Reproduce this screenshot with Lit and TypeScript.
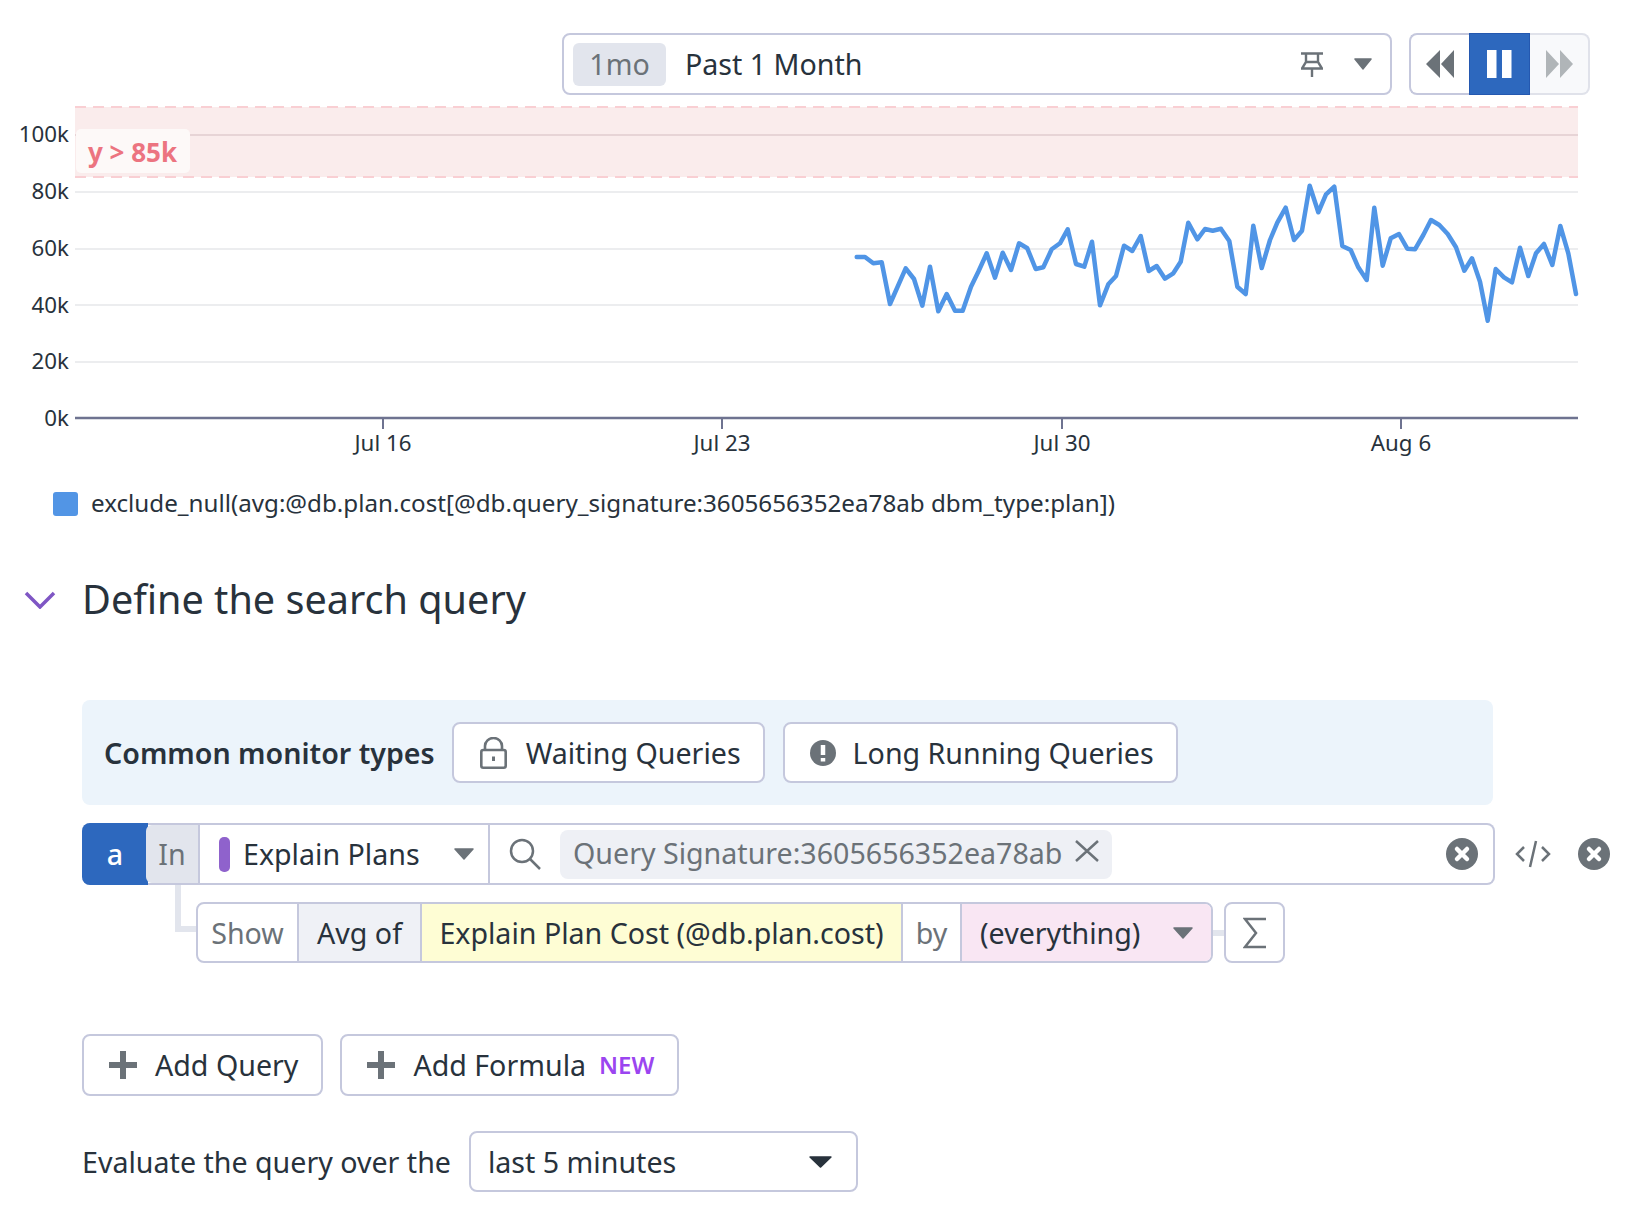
import { LitElement, html, svg, css } from "lit";
import { customElement } from "lit/decorators.js";

// points read off the reference, in page pixels
const zoomA = [[50,261],[75,261],[100,280],[125,277],[150,402],[197,295],[222,327],[247,407],[270,290],[295,424],[320,372],[345,422],[368,422],[393,350],[415,305],[440,250],[465,323],[488,248],[513,300],[537,220],[562,235],[587,297],[610,292],[635,238],[660,220],[683,178],[708,282],[733,290],[756,215],[780,406],[805,343],[828,318],[852,227],[877,243],[902,198],[926,303],[950,288],[975,326],[1000,310],[1022,275],[1045,158],[1072,208],[1095,177],[1118,182],[1143,176]];
const zoomB = [[3,177],[28,213],[52,350],[77,372],[100,167],[125,294],[150,210],[172,158],[197,113],[222,210],[246,182],[269,47],[295,127],[318,73],[343,50],[367,228],[392,240],[415,292],[440,330],[463,113],[488,287],[512,205],[537,192],[562,236],[585,238],[610,195],[633,150],[658,165],[683,192],[708,232],[733,302],[756,265],[780,335],[803,452],[827,297],[852,322],[876,337],[900,233],[925,318],[948,250],[972,222],[997,285],[1021,168],[1045,250],[1068,372]];
const CHART_TOP = 100;
const linePoints = [
  ...zoomA.map(([x, y]) => [840 + x / 3, 170 + y / 3 - CHART_TOP]),
  ...zoomB.map(([x, y]) => [1220 + x / 3, 170 + y / 3 - CHART_TOP]),
].map(([x, y]) => `${x.toFixed(1)},${y.toFixed(1)}`).join(" ");

const yTicks = [
  { label: "100k", y: 35, textY: 42 },
  { label: "80k", y: 92, textY: 99 },
  { label: "60k", y: 149, textY: 156 },
  { label: "40k", y: 205, textY: 213 },
  { label: "20k", y: 262, textY: 269 },
];
const xTicks = [
  { label: "Jul 16", x: 383 },
  { label: "Jul 23", x: 722 },
  { label: "Jul 30", x: 1062 },
  { label: "Aug 6", x: 1401 },
];

const caret = (color: string, w = 20) => html`<svg class="caret" width=${w} height="12" viewBox="0 0 20 12" preserveAspectRatio="none"><path d="M1 1H19L10 11Z" fill=${color} stroke=${color} stroke-width="1.5" stroke-linejoin="round"></path></svg>`;
const circleX = html`<svg width="32" height="32" viewBox="0 0 32 32"><circle cx="16" cy="16" r="16" fill="#6b7278"></circle><path d="M11 11L21 21M21 11L11 21" stroke="#fff" stroke-width="4.5" stroke-linecap="round"></path></svg>`;
const plus = html`<svg width="30" height="30" viewBox="0 0 30 30"><path d="M15 1V29M1 15H29" stroke="#6b7278" stroke-width="6"></path></svg>`;

@customElement("app-root")
export class AppRoot extends LitElement {
  static styles = css`
    :host {
      display: block;
      width: 1636px;
      height: 1222px;
      padding-top: 33px;
      box-sizing: border-box;
      font-family: "Noto Sans", sans-serif;
      font-size: 28.6px;
      color: #28323c;
      background: #fff;
    }
    .toolbar {
      display: flex;
      justify-content: flex-end;
      gap: 17px;
      height: 62px;
      padding-right: 46px;
    }
    .picker {
      width: 830px;
      box-sizing: border-box;
      display: flex;
      align-items: center;
      border: 2px solid #c5c8dd;
      border-radius: 8px;
      padding: 0 18px 0 9px;
    }
    .picker .badge {
      width: 93px;
      height: 43px;
      box-sizing: border-box;
      padding-bottom: 2px;
      background: #e2e5ed;
      border-radius: 6px;
      color: #6b7278;
      display: flex;
      align-items: center;
      justify-content: center;
      margin-right: 19px;
    }
    .picker .range { flex: 1; padding-bottom: 2px; }
    .picker .pin { margin-right: 31px; display: block; }
    .playback {
      width: 181px;
      box-sizing: border-box;
      display: flex;
    }
    .playback div {
      display: flex;
      align-items: center;
      justify-content: center;
      box-sizing: border-box;
    }
    .playback .back {
      width: 60px;
      border: 2px solid #c5c8dd;
      border-right: 0;
      border-radius: 8px 0 0 8px;
    }
    .playback .pause {
      width: 61px;
      background: #2d68be;
      box-shadow: inset 0 0 0 1px #2458b0;
    }
    .playback .forward {
      flex: 1;
      background: #f8f9fb;
      border: 2px solid #e0e2ea;
      border-left: 0;
      border-radius: 0 8px 8px 0;
    }
    .chart { display: block; margin-top: 5px; }
    .chart text { font-family: "Noto Sans", sans-serif; font-size: 22.3px; fill: #28323c; }
    .chart .threshold-label { font-size: 26px; font-weight: 700; fill: #ec7480; }
    .legend {
      display: flex;
      align-items: center;
      gap: 13px;
      margin: 12px 0 0 53px;
      height: 24px;
      font-size: 24.2px;
    }
    .legend i { width: 25px; height: 24px; background: #5295e5; border-radius: 3px; }
    .legend span { position: relative; top: -2px; }
    .heading {
      display: flex;
      align-items: center;
      margin-top: 54px;
      height: 60px;
      padding-left: 24px;
    }
    .heading svg { margin-right: 26px; }
    .heading h2 { margin: 0 0 2px; font-size: 39.6px; font-weight: 400; }
    .section { padding-left: 82px; }
    .panel {
      width: 1411px;
      height: 105px;
      box-sizing: border-box;
      margin-top: 70px;
      background: #ecf4fb;
      border-radius: 8px;
      display: flex;
      align-items: center;
      padding-left: 22px;
      gap: 18px;
    }
    .panel b { font-weight: 600; margin-right: -1px; }
    .btn {
      height: 61px;
      box-sizing: border-box;
      background: #fff;
      border: 2px solid #c5c8dd;
      border-radius: 8px;
      display: inline-flex;
      align-items: center;
      white-space: nowrap;
    }
    .panel .btn { padding: 0 22px 0 25px; gap: 17px; }
    .panel .btn.lock { padding: 0 22px 0 26px; gap: 19px; }
    .query {
      margin-top: 18px;
      display: flex;
      align-items: center;
    }
    .bar {
      width: 1413px;
      height: 62px;
      box-sizing: border-box;
      display: flex;
      align-items: stretch;
      border: 2px solid #c5c8dd;
      border-left: 0;
      border-radius: 8px;
    }
    .bar .letter {
      width: 66px;
      margin: -2px 0;
      padding-bottom: 2px;
      font-weight: 500;
      box-sizing: border-box;
      background: #2d68be;
      color: #fff;
      border-radius: 8px 0 0 8px;
      display: flex;
      align-items: center;
      justify-content: center;
    }
    .bar .in {
      width: 54px;
      margin-left: -2px;
      padding-bottom: 2px;
      background: #e2e5ed;
      color: #6b7278;
      border-right: 2px solid #c5c8dd;
      border-radius: 6px 0 0 6px;
      box-sizing: border-box;
      display: flex;
      align-items: center;
      justify-content: center;
    }
    .bar .source {
      width: 290px;
      box-sizing: border-box;
      display: flex;
      align-items: center;
      border-right: 2px solid #c5c8dd;
      padding: 0 14px 0 19px;
    }
    .bar .source i { width: 11px; height: 35px; background: #8f62cc; border-radius: 5px; margin-right: 13px; }
    .bar .source span { flex: 1; padding-bottom: 2px; }
    .bar .search { flex: 1; display: flex; align-items: center; padding: 0 15px 0 19px; }
    .bar .chip {
      display: flex;
      align-items: center;
      height: 49px;
      box-sizing: border-box;
      margin-left: 19px;
      padding: 0 13px 4px 13px;
      background: #eef0f5;
      border-radius: 8px;
      color: #6b7278;
      gap: 13px;
    }
    .bar .chip svg { margin-bottom: 2px; }
    .bar .spacer { flex: 1; }
    .query-actions { display: flex; align-items: center; margin-left: 20px; gap: 27px; }
    .aggregate {
      display: flex;
      align-items: center;
      margin: 17px 0 0 114px;
      position: relative;
    }
    .elbow {
      position: absolute;
      left: 0;
      top: -17px;
      width: 21px;
      height: 47px;
      margin-left: -21px;
      border-left: 6px solid #e2e5ed;
      border-bottom: 6px solid #e2e5ed;
      box-sizing: border-box;
    }
    .group {
      width: 1017px;
      height: 61px;
      box-sizing: border-box;
      display: flex;
      align-items: stretch;
      border: 2px solid #c5c8dd;
      border-radius: 8px;
    }
    .group > div {
      display: flex;
      align-items: center;
      justify-content: center;
      box-sizing: border-box;
      border-right: 2px solid #c5c8dd;
    }
    .group .label { color: #6b7278; }
    .group .show { width: 101px; }
    .group .avg { width: 123px; background: #eff1f6; }
    .group .metric { width: 481px; background: #fefdd4; }
    .group .by { width: 59px; }
    .group .everything {
      flex: 1;
      background: #f9e6f3;
      border-right: 0;
      border-radius: 0 6px 6px 0;
      justify-content: space-between;
      padding: 0 18px 0 18px;
    }
    .connector { width: 11px; height: 6px; background: #e2e5ed; }
    .sigma {
      width: 61px;
      height: 61px;
      box-sizing: border-box;
      border: 2px solid #c5c8dd;
      border-radius: 8px;
      display: flex;
      align-items: center;
      justify-content: center;
    }
    .adds { display: flex; gap: 17px; margin-top: 71px; }
    .adds .btn { height: 62px; padding: 0 23px 2px 24px; gap: 17px; }
    .adds .btn svg { margin-top: 2px; }
    .adds .new { color: #9b45f0; font-size: 24px; font-weight: 600; margin-left: -4px; }
    .evaluate { display: flex; align-items: center; gap: 18px; margin-top: 35px; }
    .evaluate .btn {
      width: 389px;
      height: 61px;
      justify-content: space-between;
      padding: 0 24px 0 17px;
    }
  `;

  render() {
    return html`
      <div class="toolbar">
        <div class="picker">
          <span class="badge">1mo</span>
          <span class="range">Past 1 Month</span>
          <svg class="pin" width="22" height="25" viewBox="0 0 22 25" fill="none" stroke="#6b7278" stroke-width="2.4">
            <path d="M0 1.5H22M5 1.5V10L1 16.5H21L17 10V1.5M11 16.5V25M5 10H17"></path>
          </svg>
          ${caret("#6b7278", 18)}
        </div>
        <div class="playback">
          <div class="back">
            <svg width="28" height="28" viewBox="0 0 28 28"><path d="M14 0L0 14L14 28ZM28 0L15 14L28 28Z" fill="#6b7278"></path></svg>
          </div>
          <div class="pause">
            <svg width="25" height="28" viewBox="0 0 25 28"><path d="M0 0H9.500V28H0ZM15 0H24.500V28H15Z" fill="#fff"></path></svg>
          </div>
          <div class="forward">
            <svg width="27" height="28" viewBox="0 0 27 28"><path d="M0 0L13 14L0 28ZM14 0L27 14L14 28Z" fill="#b0b5b8"></path></svg>
          </div>
        </div>
      </div>

      <svg class="chart" width="1636" height="380">
        ${[...yTicks, { label: "0k", y: 318, textY: 326 }].map((t) => svg`<text x="69" y=${t.textY} text-anchor="end">${t.label}</text>`)}
        <rect x="75" y="7" width="1503" height="70" fill="#faecec"></rect>
        ${yTicks.map((t) => svg`<line x1="75" x2="1578" y1=${t.y} y2=${t.y} stroke=${t.y === 35 ? "#e0cdcf" : "#e6e7ea"} stroke-width="1.5"></line>`)}
        <path d="M75 7H1578M75 77H1578" stroke="#f9cfd3" stroke-width="2" stroke-dasharray="11 7" fill="none"></path>
        <rect x="76" y="29" width="114" height="44" rx="5" fill="#fdf9f8"></rect>
        <text class="threshold-label" x="88" y="62">y &gt; 85k</text>
        <line x1="75" x2="1578" y1="318" y2="318" stroke="#6e7390" stroke-width="2.5"></line>
        ${xTicks.map((t) => svg`
          <line x1=${t.x} x2=${t.x} y1="318" y2="329" stroke="#6e7390" stroke-width="2"></line>
          <text x=${t.x} y="351" text-anchor="middle">${t.label}</text>`)}
        <polyline points=${linePoints} fill="none" stroke="#5095e6" stroke-width="4.5" stroke-linejoin="round" stroke-linecap="round"></polyline>
      </svg>

      <div class="legend"><i></i><span>exclude_null(avg:@db.plan.cost[@db.query_signature:3605656352ea78ab dbm_type:plan])</span></div>

      <div class="heading">
        <svg width="32" height="18" viewBox="0 0 32 18" fill="none"><path d="M2 2L16 16L30 2" stroke="#7f56c4" stroke-width="3.5"></path></svg>
        <h2>Define the search query</h2>
      </div>

      <div class="section">
        <div class="panel">
          <b>Common monitor types</b>
          <span class="btn lock">
            <svg width="27" height="32" viewBox="0 0 27 32" fill="none" stroke="#6b7278" stroke-width="2.6">
              <rect x="1.300" y="13" width="24.400" height="17.700" rx="2"></rect>
              <path d="M5 13V9a8.500 8 0 0 1 17 0V13"></path>
              <path d="M13.500 19.500V24" stroke-width="3"></path>
            </svg>
            Waiting Queries
          </span>
          <span class="btn">
            <svg width="26" height="26" viewBox="0 0 26 26"><circle cx="13" cy="13" r="13" fill="#6b7278"></circle><path d="M13 5V15M13 18V21.500" stroke="#fff" stroke-width="4.500"></path></svg>
            Long Running Queries
          </span>
        </div>

        <div class="query">
          <div class="bar">
            <div class="letter">a</div>
            <div class="in">In</div>
            <div class="source"><i></i><span>Explain Plans</span>${caret("#6b7278")}</div>
            <div class="search">
              <svg width="32" height="32" viewBox="0 0 32 32" fill="none" stroke="#6b7278" stroke-width="2.5"><circle cx="13" cy="13" r="11"></circle><path d="M21 21L31 31"></path></svg>
              <div class="chip">
                Query Signature:3605656352ea78ab
                <svg width="24" height="22" viewBox="0 0 24 22" fill="none" stroke="#6b7278" stroke-width="2.5"><path d="M1 1L23 21M23 1L1 21"></path></svg>
              </div>
              <div class="spacer"></div>
              ${circleX}
            </div>
          </div>
          <div class="query-actions">
            <svg width="36" height="28" viewBox="0 0 36 28" fill="none" stroke="#6b7278" stroke-width="2.5"><path d="M9 7L2 14L9 21M27 7L34 14L27 21M21 1L15 27"></path></svg>
            ${circleX}
          </div>
        </div>

        <div class="aggregate">
          <div class="elbow"></div>
          <div class="group">
            <div class="label show">Show</div>
            <div class="avg">Avg of</div>
            <div class="metric">Explain Plan Cost (@db.plan.cost)</div>
            <div class="label by">by</div>
            <div class="everything"><span>(everything)</span>${caret("#6b7278")}</div>
          </div>
          <div class="connector"></div>
          <div class="sigma">
            <svg width="24" height="32" viewBox="0 0 24 32" fill="none" stroke="#6b7278" stroke-width="2.5"><path d="M23 2H2L13 16L2 30H23"></path></svg>
          </div>
        </div>

        <div class="adds">
          <span class="btn">${plus}Add Query</span>
          <span class="btn">${plus}Add Formula <span class="new">NEW</span></span>
        </div>

        <div class="evaluate">
          <span>Evaluate the query over the</span>
          <span class="btn">last 5 minutes${caret("#28323c", 23)}</span>
        </div>
      </div>
    `;
  }
}
